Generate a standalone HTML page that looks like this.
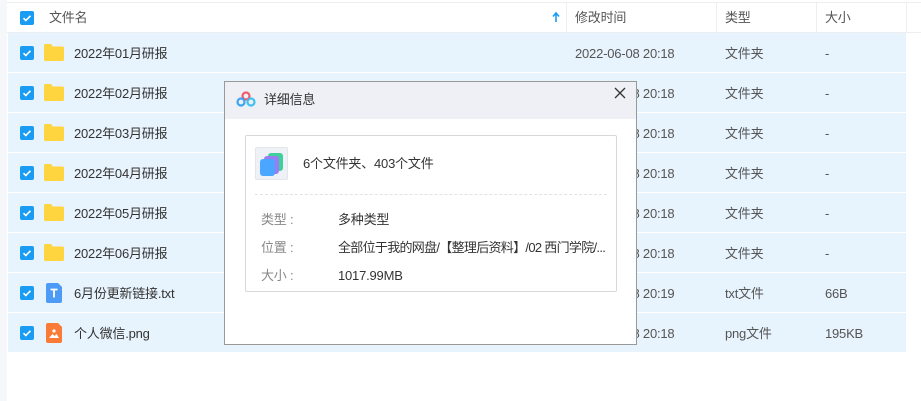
<!DOCTYPE html><html><head><meta charset="utf-8"><style>
*{margin:0;padding:0;box-sizing:border-box}
body{width:921px;height:401px;background:#fff;position:relative;overflow:hidden;font-family:"Liberation Sans","Noto Sans CJK SC",sans-serif;font-size:13px;color:#333}
.a{position:absolute}
.cb{position:absolute;left:20px;width:14px;height:14px;background:#1a9cf3;border-radius:2px}
.cb svg{position:absolute;left:0;top:0}
.row{position:absolute;left:8px;width:898px;height:39px;background:#e8f4fd}
.t{position:absolute;line-height:16px;letter-spacing:-0.2px}
.sep{position:absolute;top:3px;width:1px;height:29px;background:#eceef2}
.r .t{margin-top:1px}
</style></head><body>
<div class="a" style="left:0;top:0;width:7px;height:401px;background:#f5f7fa"></div>
<div class="a" style="left:7px;top:2px;width:914px;height:1px;background:#eceef2"></div>
<div class="a" style="left:7px;top:32px;width:914px;height:1px;background:#eceef2"></div>
<div class="cb" style="top:11px"><svg width="14" height="14"><path d="M3.5 7.2l2.3 2.3 4.7-4.7" stroke="#fff" stroke-width="1.6" fill="none"/></svg></div>
<div class="t" style="left:49px;top:10px;color:#555">文件名</div>
<svg class="a" style="left:552px;top:11px" width="8" height="12"><path d="M4 11V3M1 5.5L4 2l3 3.5" stroke="#1a9cf3" stroke-width="1.6" fill="none"/></svg>
<div class="sep" style="left:566px"></div><div class="sep" style="left:716px"></div><div class="sep" style="left:816px"></div><div class="sep" style="left:906px"></div>
<div class="t" style="left:575px;top:10px;color:#555">修改时间</div>
<div class="t" style="left:725px;top:10px;color:#555">类型</div>
<div class="t" style="left:825px;top:10px;color:#555">大小</div>

<div class="row" style="top:33px"></div><div class="row" style="top:73px"></div><div class="row" style="top:113px"></div><div class="row" style="top:153px"></div><div class="row" style="top:193px"></div><div class="row" style="top:233px"></div><div class="row" style="top:273px"></div><div class="row" style="top:313px"></div>

<div class="cb" style="top:46px"><svg width="14" height="14"><path d="M3.5 7.2l2.3 2.3 4.7-4.7" stroke="#fff" stroke-width="1.6" fill="none"/></svg></div>
<div class="cb" style="top:86px"><svg width="14" height="14"><path d="M3.5 7.2l2.3 2.3 4.7-4.7" stroke="#fff" stroke-width="1.6" fill="none"/></svg></div>
<div class="cb" style="top:126px"><svg width="14" height="14"><path d="M3.5 7.2l2.3 2.3 4.7-4.7" stroke="#fff" stroke-width="1.6" fill="none"/></svg></div>
<div class="cb" style="top:166px"><svg width="14" height="14"><path d="M3.5 7.2l2.3 2.3 4.7-4.7" stroke="#fff" stroke-width="1.6" fill="none"/></svg></div>
<div class="cb" style="top:206px"><svg width="14" height="14"><path d="M3.5 7.2l2.3 2.3 4.7-4.7" stroke="#fff" stroke-width="1.6" fill="none"/></svg></div>
<div class="cb" style="top:246px"><svg width="14" height="14"><path d="M3.5 7.2l2.3 2.3 4.7-4.7" stroke="#fff" stroke-width="1.6" fill="none"/></svg></div>
<div class="cb" style="top:286px"><svg width="14" height="14"><path d="M3.5 7.2l2.3 2.3 4.7-4.7" stroke="#fff" stroke-width="1.6" fill="none"/></svg></div>
<div class="cb" style="top:326px"><svg width="14" height="14"><path d="M3.5 7.2l2.3 2.3 4.7-4.7" stroke="#fff" stroke-width="1.6" fill="none"/></svg></div>

<svg class="a" style="left:44px;top:44px" width="20" height="17"><path d="M0 1.5Q0 0 1.5 0H7l2 2.5h9.5Q20 2.5 20 4V15.5Q20 17 18.5 17H1.5Q0 17 0 15.5Z" fill="#ffd53f"/></svg>
<svg class="a" style="left:44px;top:84px" width="20" height="17"><path d="M0 1.5Q0 0 1.5 0H7l2 2.5h9.5Q20 2.5 20 4V15.5Q20 17 18.5 17H1.5Q0 17 0 15.5Z" fill="#ffd53f"/></svg>
<svg class="a" style="left:44px;top:124px" width="20" height="17"><path d="M0 1.5Q0 0 1.5 0H7l2 2.5h9.5Q20 2.5 20 4V15.5Q20 17 18.5 17H1.5Q0 17 0 15.5Z" fill="#ffd53f"/></svg>
<svg class="a" style="left:44px;top:164px" width="20" height="17"><path d="M0 1.5Q0 0 1.5 0H7l2 2.5h9.5Q20 2.5 20 4V15.5Q20 17 18.5 17H1.5Q0 17 0 15.5Z" fill="#ffd53f"/></svg>
<svg class="a" style="left:44px;top:204px" width="20" height="17"><path d="M0 1.5Q0 0 1.5 0H7l2 2.5h9.5Q20 2.5 20 4V15.5Q20 17 18.5 17H1.5Q0 17 0 15.5Z" fill="#ffd53f"/></svg>
<svg class="a" style="left:44px;top:244px" width="20" height="17"><path d="M0 1.5Q0 0 1.5 0H7l2 2.5h9.5Q20 2.5 20 4V15.5Q20 17 18.5 17H1.5Q0 17 0 15.5Z" fill="#ffd53f"/></svg>
<svg class="a" style="left:46px;top:283px" width="16" height="20"><path d="M2 0H12L16 4V18Q16 20 14 20H2Q0 20 0 18V2Q0 0 2 0Z" fill="#4d9bf7"/><path d="M4.5 6.5h7M8 6.5v8" stroke="#fff" stroke-width="1.8"/></svg>
<svg class="a" style="left:46px;top:323px" width="16" height="20"><path d="M2 0H12L16 4V18Q16 20 14 20H2Q0 20 0 18V2Q0 0 2 0Z" fill="#fa7a38"/><circle cx="8" cy="8" r="1.6" fill="#fff"/><path d="M3 15l3.5-4 2 2 2-2 2.5 4z" fill="#fff"/></svg>

<div class="r">
<div class="t" style="left:74px;top:45px">2022年01月研报</div>
<div class="t" style="left:74px;top:85px">2022年02月研报</div>
<div class="t" style="left:74px;top:125px">2022年03月研报</div>
<div class="t" style="left:74px;top:165px">2022年04月研报</div>
<div class="t" style="left:74px;top:205px">2022年05月研报</div>
<div class="t" style="left:74px;top:245px">2022年06月研报</div>
<div class="t" style="left:74px;top:285px">6月份更新链接.txt</div>
<div class="t" style="left:74px;top:325px">个人微信.png</div>

<div class="t" style="left:575px;top:45px;color:#555">2022-06-08 20:18</div>
<div class="t" style="left:575px;top:85px;color:#555">2022-06-08 20:18</div>
<div class="t" style="left:575px;top:125px;color:#555">2022-06-08 20:18</div>
<div class="t" style="left:575px;top:165px;color:#555">2022-06-08 20:18</div>
<div class="t" style="left:575px;top:205px;color:#555">2022-06-08 20:18</div>
<div class="t" style="left:575px;top:245px;color:#555">2022-06-08 20:18</div>
<div class="t" style="left:575px;top:285px;color:#555">2022-06-08 20:19</div>
<div class="t" style="left:575px;top:325px;color:#555">2022-06-08 20:18</div>

<div class="t" style="left:725px;top:45px;color:#555">文件夹</div>
<div class="t" style="left:725px;top:85px;color:#555">文件夹</div>
<div class="t" style="left:725px;top:125px;color:#555">文件夹</div>
<div class="t" style="left:725px;top:165px;color:#555">文件夹</div>
<div class="t" style="left:725px;top:205px;color:#555">文件夹</div>
<div class="t" style="left:725px;top:245px;color:#555">文件夹</div>
<div class="t" style="left:725px;top:285px;color:#555">txt文件</div>
<div class="t" style="left:725px;top:325px;color:#555">png文件</div>

<div class="t" style="left:825px;top:45px;color:#555">-</div>
<div class="t" style="left:825px;top:85px;color:#555">-</div>
<div class="t" style="left:825px;top:125px;color:#555">-</div>
<div class="t" style="left:825px;top:165px;color:#555">-</div>
<div class="t" style="left:825px;top:205px;color:#555">-</div>
<div class="t" style="left:825px;top:245px;color:#555">-</div>
<div class="t" style="left:825px;top:285px;color:#555">66B</div>
<div class="t" style="left:825px;top:325px;color:#555">195KB</div>
</div>

<div class="a" style="left:224px;top:81px;width:413px;height:264px;background:#fff;border:1px solid #999">
 <div class="a" style="left:0;top:0;width:411px;height:37px;background:#eef0f5"></div>
 <svg class="a" style="left:11px;top:9px" width="20" height="16"><circle cx="10" cy="5" r="3.5" fill="none" stroke="#ef5a6a" stroke-width="2.2"/><circle cx="5" cy="11" r="3.5" fill="none" stroke="#3aa5f5" stroke-width="2.2"/><circle cx="15" cy="11" r="3.5" fill="none" stroke="#3ec3f0" stroke-width="2.2"/></svg>
 <div class="t" style="left:39px;top:10px;color:#333">详细信息</div>
 <svg class="a" style="left:389px;top:5px" width="12" height="12"><path d="M1 1l10 10M11 1L1 11" stroke="#333" stroke-width="1.3"/></svg>
 <div class="a" style="left:20px;top:53px;width:372px;height:157px;border:1px solid #d6d8dc;border-radius:2px">
  <div class="a" style="left:9px;top:11px;width:33px;height:33px;background:#eef1f5;border:1px solid #e2e5ea;border-radius:2px"></div>
  <div class="a" style="left:22px;top:17px;width:15px;height:18px;background:#3ecf9a;border-radius:3px"></div>
  <div class="a" style="left:18px;top:20px;width:15px;height:18px;background:#9a7cf5;border-radius:3px"></div>
  <div class="a" style="left:14px;top:23px;width:15px;height:17px;background:#4aa6ff;border-radius:3px"></div>
  <div class="t" style="left:57px;top:20px;color:#333">6个文件夹、403个文件</div>
  <div class="a" style="left:9px;top:58px;width:352px;border-top:1px dashed #e0e2e6"></div>
  <div class="t" style="left:15px;top:76px;color:#888">类型 :</div>
  <div class="t" style="left:92px;top:76px">多种类型</div>
  <div class="t" style="left:15px;top:104px;color:#888">位置 :</div>
  <div class="t" style="left:92px;top:104px;white-space:nowrap;letter-spacing:-0.7px">全部位于我的网盘/【整理后资料】/02 西门学院/...</div>
  <div class="t" style="left:15px;top:132px;color:#888">大小 :</div>
  <div class="t" style="left:92px;top:132px">1017.99MB</div>
 </div>
</div>
</body></html>
